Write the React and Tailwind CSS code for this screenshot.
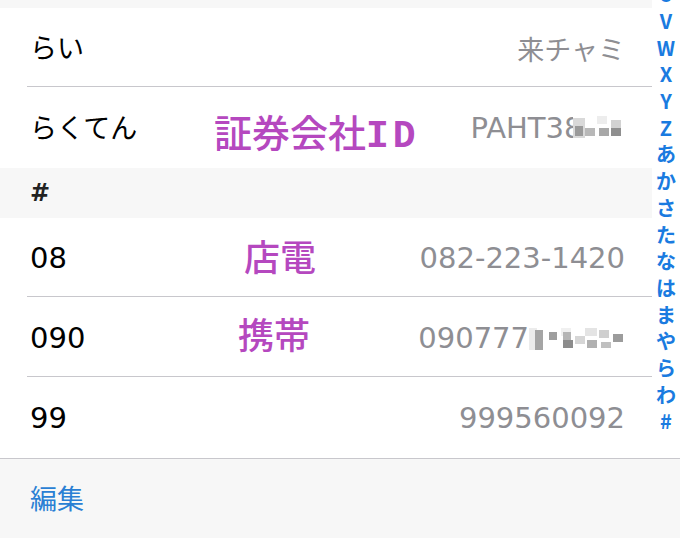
import React from 'react'

const latin = '"DejaVu Sans", "Noto Sans CJK JP", sans-serif'
const jp = '"Noto Sans CJK JP", "DejaVu Sans", sans-serif'

const indexLetters = ['U', 'V', 'W', 'X', 'Y', 'Z', 'あ', 'か', 'さ', 'た', 'な', 'は', 'ま', 'や', 'ら', 'わ', '#']

// pixelated censor block drawn as a few grey squares
function Mosaic({ cells, width }) {
  return (
    <svg width={width} height="30" viewBox={`0 0 ${width} 30`} className="shrink-0">
      {cells.map((c, i) => (
        <rect key={i} x={c[0]} y={c[1]} width={c[2]} height={c[3]} fill={c[4]} />
      ))}
    </svg>
  )
}

function Row({ title, detail, separator = true, latinTitle = false, children }) {
  return (
    <div className="relative h-[80px] flex items-center justify-between pl-[30px] pr-[27px] bg-white">
      <span className={latinTitle ? 'text-[29px] text-black mt-[2px]' : 'text-[27px] text-black mt-[2px]'}>{title}</span>
      <div className="flex items-center text-[29px] text-[#8e8e93] mt-[2px]">{detail}</div>
      {children}
      {separator && <div className="absolute bottom-[1px] left-[27px] right-0 h-px bg-[#c8c7cc]" />}
    </div>
  )
}

function Note({ children, className }) {
  return (
    <span
      className={`absolute font-medium leading-none text-[#b548bf] ${className}`}
      style={{ fontFamily: jp }}
    >
      {children}
    </span>
  )
}

export default function App() {
  return (
    <div className="w-[680px] h-[538px] overflow-hidden flex flex-col bg-white" style={{ fontFamily: latin }}>
      <div className="flex h-[458px]">
        <div className="w-[652px] flex flex-col">
          <div className="h-[8px] bg-[#f7f7f7]" />
          <Row title="らい" detail={<span style={{ fontFamily: jp }} className="text-[27px]">来チャミ</span>} />
          <Row
            title="らくてん"
            separator={false}
            detail={
              <>
                <span>PAHT3</span>
                <span className="inline-block w-[9px] overflow-hidden">8</span>
                <Mosaic
                  width={52}
                  cells={[
                    [0, 4, 12, 20, '#d9d9d9'],
                    [2, 12, 8, 10, '#9a9a9a'],
                    [12, 14, 10, 8, '#b8b8b8'],
                    [24, 2, 10, 8, '#ededed'],
                    [26, 14, 10, 8, '#a8a8a8'],
                    [38, 6, 10, 8, '#d2d2d2'],
                    [38, 14, 10, 8, '#8f8f8f'],
                  ]}
                />
              </>
            }
          >
            <Note className="left-[214px] top-[24px] text-[38px]">
              証券会社<span className="font-bold tracking-[4px]" style={{ fontFamily: '"Liberation Mono", monospace' }}>ID</span>
            </Note>
          </Row>
          <div className="h-[50px] bg-[#f7f7f7] flex items-center pl-[30px]">
            <span className="text-[24px] font-bold text-[#222]">#</span>
          </div>
          <Row title="08" detail="082-223-1420" latinTitle>
            <Note className="left-[244px] top-[19px] text-[36px]">店電</Note>
          </Row>
          <Row
            title="090"
            latinTitle
            detail={
              <>
                <span>090777</span>
                <Mosaic
                  width={96}
                  cells={[
                    [0, 4, 8, 22, '#ececec'],
                    [6, 6, 8, 20, '#a5a5a5'],
                    [20, 8, 8, 8, '#9e9e9e'],
                    [32, 4, 10, 8, '#f0f0f0'],
                    [34, 8, 8, 8, '#b5b5b5'],
                    [34, 16, 10, 8, '#8c8c8c'],
                    [46, 12, 10, 8, '#d6d6d6'],
                    [56, 4, 12, 8, '#e4e4e4'],
                    [58, 16, 10, 8, '#b0b0b0'],
                    [70, 6, 10, 8, '#cfcfcf'],
                    [72, 18, 10, 6, '#c0c0c0'],
                    [84, 10, 10, 8, '#9c9c9c'],
                  ]}
                />
              </>
            }
          >
            <Note className="left-[238px] top-[17px] text-[36px]">携帯</Note>
          </Row>
          <Row title="99" detail="999560092" separator={false} latinTitle />
        </div>
        <div className="w-[28px] flex flex-col items-center mt-[-19px] bg-white">
          {indexLetters.map((l) => (
            <div
              key={l}
              className="h-[26.7px] shrink-0 flex items-center justify-center text-[20px] font-bold text-[#1a7be0] leading-none"
              style={{ fontFamily: jp }}
            >
              {l}
            </div>
          ))}
        </div>
      </div>
      <div className="flex-1 bg-[#f7f7f7] border-t border-[#c8c7cc] flex items-center pl-[30px]">
        <span className="text-[27px] text-[#2a7fd4]" style={{ fontFamily: jp }}>編集</span>
      </div>
    </div>
  )
}
